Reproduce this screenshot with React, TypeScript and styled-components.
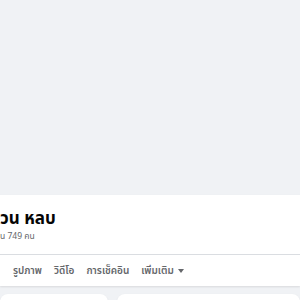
import * as React from 'react';
import styled, { createGlobalStyle } from 'styled-components';

const GlobalStyle = createGlobalStyle`
  html, body {
    margin: 0;
    padding: 0;
    background: #f0f2f5;
    font-family: "Noto Sans", "Noto Sans Thai", sans-serif;
  }
`;

const Page = styled.div`
  width: 300px;
  height: 300px;
  overflow: hidden;
  background: #f0f2f5;
`;

const Cover = styled.div`
  height: 195px;
  background: #f0f2f5;
`;

const ProfileCard = styled.section`
  background: #ffffff;
  box-shadow: 0 1px 2px rgba(0, 0, 0, 0.1);
`;

const NameBlock = styled.header`
  height: 60px;
  padding-top: 12px;
  box-sizing: border-box;
  border-bottom: 1px solid #dadde1;
`;

const Name = styled.h1`
  margin: 0;
  font-size: 17px;
  line-height: 22px;
  font-weight: 700;
  color: #050505;
`;

const Friends = styled.span`
  display: block;
  margin-top: 1px;
  font-size: 8.5px;
  line-height: 11px;
  color: #65676b;
`;

const Tabs = styled.nav`
  height: 31px;
  display: flex;
  align-items: center;
  gap: 12px;
  padding-left: 13px;
`;

const Tab = styled.span`
  display: flex;
  align-items: center;
  gap: 4px;
  font-size: 10px;
  font-weight: 600;
  color: #65676b;
  white-space: nowrap;
`;

const Caret = styled.span`
  width: 0;
  height: 0;
  border-left: 3px solid transparent;
  border-right: 3px solid transparent;
  border-top: 4px solid #65676b;
`;

const Content = styled.div`
  display: flex;
  gap: 9px;
  padding-top: 8px;
`;

const Card = styled.div<{ $width?: number }>`
  flex: ${(p) => (p.$width ? `0 0 ${p.$width}px` : '1')};
  height: 120px;
  background: #ffffff;
  border-radius: 8px;
  box-shadow: 0 1px 2px rgba(0, 0, 0, 0.1);
`;

const tabs = ['รูปภาพ', 'วิดีโอ', 'การเช็คอิน'];

export default function App() {
  return (
    <Page>
      <GlobalStyle />
      <Cover />
      <ProfileCard>
        <NameBlock>
          <Name>วน หลบ</Name>
          <Friends>น 749 คน</Friends>
        </NameBlock>
        <Tabs>
          {tabs.map((t) => (
            <Tab key={t}>{t}</Tab>
          ))}
          <Tab>
            เพิ่มเติม
            <Caret />
          </Tab>
        </Tabs>
      </ProfileCard>
      <Content>
        <Card $width={108} />
        <Card />
      </Content>
    </Page>
  );
}
